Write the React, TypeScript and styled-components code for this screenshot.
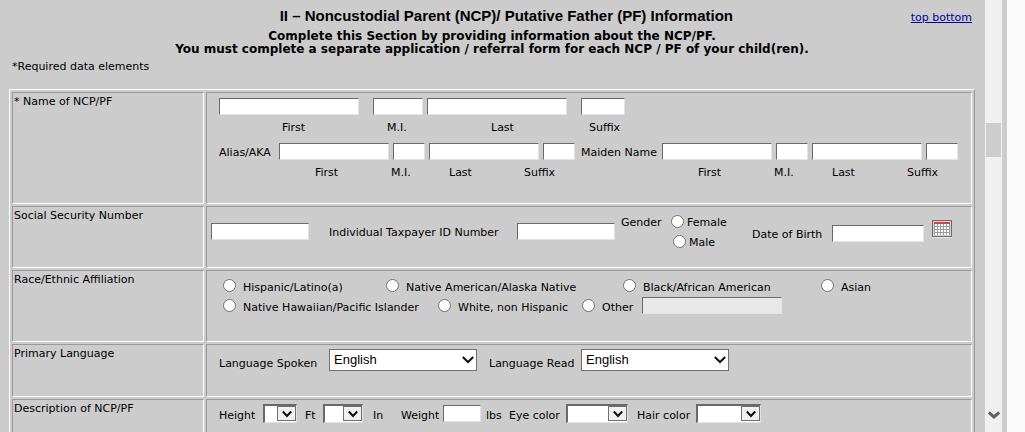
import React from "react";
import styled, { createGlobalStyle, css } from "styled-components";

const Global = createGlobalStyle`
  * { box-sizing: border-box; }
  body {
    margin: 0;
    background: #cccccc;
    color: #000;
    font: 11px/13px Verdana, "DejaVu Sans", sans-serif;
  }
`;

const Frame = styled.div`
  display: flex;
  height: 100vh;
  overflow: hidden;
`;

const Pane = styled.main`
  flex: 1;
  min-width: 0;
  padding: 8px 10px 0 9px;
  overflow: hidden;
`;

const ScrollTrack = styled.div`
  display: flex;
  flex-direction: column;
  justify-content: space-between;
  align-items: center;
  width: 17px;
  padding: 123px 0 13px;
  background: #f0f0f0;
`;

const ScrollThumb = styled.div`
  width: 15px;
  height: 34px;
  background: #cdcdcd;
`;

const Gutter = styled.div`
  width: 23px;
  border-left: 5px solid #cccccc;
  background: #fafafa;
`;

const Header = styled.header`
  display: flex;
  align-items: center;
  padding-right: 3px;
`;

const Title = styled.h1`
  flex: 1;
  margin: 0;
  padding-left: 93px;
  font: bold 15px/16px "Liberation Sans", Arial, sans-serif;
  text-align: center;
`;

const JumpLink = styled.a`
  padding-top: 2px;
  color: #00009c;
`;

const Intro = styled.p`
  margin: 6px 0 0;
  font-size: 12px;
  font-weight: bold;
  text-align: center;
`;

const Required = styled.p`
  margin: 4px 0 16px;
  padding-left: 3px;
`;

const FormTable = styled.table`
  width: 100%;
  border: 1px solid;
  border-color: #fff #999 #999 #fff;
  border-spacing: 2px;
  table-layout: fixed;
`;

const cell = css<{ $h?: number }>`
  height: ${(p) => p.$h}px;
  border: 1px solid;
  border-color: #999 #fff #fff #999;
  vertical-align: top;
`;

const RowHead = styled.th<{ $h: number }>`
  ${cell}
  width: 192px;
  padding: 2px 1px;
  font-weight: normal;
  text-align: left;
`;

const RowBody = styled.td`
  ${cell}
  padding: 0 0 0 12px;
`;

const Line = styled.div<{ $top?: number; $indent?: number }>`
  display: flex;
  align-items: center;
  margin-top: ${(p) => p.$top ?? 0}px;
  padding-left: ${(p) => p.$indent ?? 0}px;
  white-space: nowrap;
`;

const SsnLine = styled(Line)`
  margin-left: -8px;
`;

const Label = styled.label<{ $w?: number; $top?: number }>`
  flex: none;
  width: ${(p) => (p.$w ? `${p.$w}px` : "auto")};
  padding-top: ${(p) => p.$top ?? 0}px;
`;

const TextBox = styled.input<{ $w: number; $after?: number }>`
  flex: none;
  width: ${(p) => p.$w}px;
  height: 17px;
  margin: 0 ${(p) => p.$after ?? 4}px 0 0;
  padding: 0 2px;
  border: 1px solid;
  border-color: #696969 #e3e3e3 #e3e3e3 #696969;
  border-radius: 0;
  background: #fff;
  font: inherit;

  &:disabled {
    background: #e8e8e8;
  }
`;

const Radio = styled.input.attrs({ type: "radio" })<{ $after?: number }>`
  appearance: none;
  flex: none;
  width: 13px;
  height: 13px;
  margin: 0 ${(p) => p.$after ?? 7}px 0 0;
  border: 1px solid #707070;
  border-radius: 50%;
  background: #fff;

  &:checked {
    box-shadow: inset 0 0 0 3px #fff;
    background: #222;
  }
`;

const GenderGroup = styled.div`
  display: flex;
  align-items: flex-start;
`;

const Genders = styled.div`
  width: 81px;
`;

const Birth = styled.div`
  display: flex;
  align-items: center;
  padding-top: 4px;
`;

const SelectWrap = styled.span<{ $w: number; $after: number }>`
  position: relative;
  flex: none;
  width: ${(p) => p.$w}px;
  margin-right: ${(p) => p.$after}px;
`;

const LanguageSelect = styled.select`
  appearance: none;
  display: block;
  width: 100%;
  height: 22px;
  padding: 0 4px;
  border: 1px solid #707070;
  border-radius: 0;
  background: #fff;
  color: #000;
  font: 13px/20px "Liberation Sans", Arial, sans-serif;
`;

const LanguageArrow = styled.svg`
  position: absolute;
  top: 7px;
  right: 3px;
  pointer-events: none;
`;

const InsetSelect = styled.select`
  appearance: none;
  display: block;
  width: 100%;
  height: 19px;
  padding: 0 20px 0 2px;
  border: 1px solid;
  border-color: #696969 #e3e3e3 #e3e3e3 #696969;
  border-top-width: 2px;
  border-left-width: 2px;
  border-radius: 0;
  background: #fff;
  font: inherit;
`;

const InsetArrow = styled.span`
  position: absolute;
  top: 2px;
  right: 1px;
  display: flex;
  align-items: center;
  justify-content: center;
  width: 19px;
  height: 15px;
  border: 1px solid #707070;
  background: #f0f0f0;
  pointer-events: none;
`;

const CalendarButton = styled.button`
  width: 20px;
  height: 18px;
  margin: 0 0 6px 4px;
  padding: 0;
  border: 0;
  background: none;
  line-height: 0;
`;

function Chevron({ size, color = "#111", weight = 2 }: { size: number; color?: string; weight?: number }) {
  return (
    <svg width={size} height={8} viewBox={`0 0 ${size} 8`} aria-hidden="true">
      <path
        d={`M0.8 1.5 L${size / 2} 6 L${size - 0.8} 1.5`}
        fill="none"
        stroke={color}
        strokeWidth={weight}
      />
    </svg>
  );
}

function Language({ id, after = 0 }: { id: string; after?: number }) {
  return (
    <SelectWrap $w={148} $after={after}>
      <LanguageSelect id={id} defaultValue="English">
        <option>English</option>
      </LanguageSelect>
      <LanguageArrow width="12" height="8" viewBox="0 0 12 8" aria-hidden="true">
        <path d="M0.8 1 L6 6 L11.2 1" fill="none" stroke="#111" strokeWidth="2" />
      </LanguageArrow>
    </SelectWrap>
  );
}

function SmallSelect({ id, width, after = 0 }: { id: string; width: number; after?: number }) {
  return (
    <SelectWrap $w={width} $after={after}>
      <InsetSelect id={id}>
        <option></option>
      </InsetSelect>
      <InsetArrow>
        <Chevron size={10} />
      </InsetArrow>
    </SelectWrap>
  );
}

function Choice({ id, text, width }: { id: string; text: string; width?: number }) {
  return (
    <>
      <Radio id={id} name="race" />
      <Label htmlFor={id} $w={width} $top={5}>
        {text}
      </Label>
    </>
  );
}

function CalendarIcon() {
  const cols = [0, 1, 2, 3, 4];
  const rows = [0, 1, 2, 3];
  return (
    <svg width="20" height="18" viewBox="0 0 20 18" shapeRendering="crispEdges" aria-hidden="true">
      <rect width="20" height="17" fill="#6b6b6b" />
      <rect x="1" y="1" width="18" height="15" fill="#d4d4d4" />
      <rect x="2" y="2" width="16" height="2" fill="#d9433f" />
      <rect x="2" y="4" width="16" height="11" fill="#a09c9c" />
      {rows.map((r) =>
        cols.map((c) => (
          <rect key={`${r}-${c}`} x={3 + c * 3} y={4 + r * 3} width="2" height="2" fill="#fff" />
        ))
      )}
      <rect y="17" width="20" height="1" fill="#e6e6e6" />
    </svg>
  );
}

export default function App() {
  return (
    <>
      <Global />
      <Frame>
        <Pane>
          <Header>
            <Title>II – Noncustodial Parent (NCP)/ Putative Father (PF) Information</Title>
            <JumpLink href="#top">top bottom</JumpLink>
          </Header>
          <Intro>
            Complete this Section by providing information about the NCP/PF.
            <br />
            You must complete a separate application / referral form for each NCP / PF of your child(ren).
          </Intro>
          <Required>*Required data elements</Required>
          <FormTable>
            <tbody>
              <tr>
                <RowHead scope="row" $h={112}>* Name of NCP/PF</RowHead>
                <RowBody>
                  <Line $top={5}>
                    <TextBox id="first" $w={140} $after={14} />
                    <TextBox id="mi" $w={50} />
                    <TextBox id="last" $w={140} $after={14} />
                    <TextBox id="suffix" $w={44} />
                  </Line>
                  <Line $top={6} $indent={63}>
                    <Label htmlFor="first" $w={105}>First</Label>
                    <Label htmlFor="mi" $w={104}>M.I.</Label>
                    <Label htmlFor="last" $w={98}>Last</Label>
                    <Label htmlFor="suffix">Suffix</Label>
                  </Line>
                  <Line $top={9}>
                    <Label htmlFor="alias-first" $w={60} $top={1}>Alias/AKA</Label>
                    <TextBox id="alias-first" $w={110} />
                    <TextBox id="alias-mi" $w={32} />
                    <TextBox id="alias-last" $w={110} />
                    <TextBox id="alias-suffix" $w={32} $after={6} />
                    <Label htmlFor="maiden-first" $w={81} $top={1}>Maiden Name</Label>
                    <TextBox id="maiden-first" $w={110} />
                    <TextBox id="maiden-mi" $w={32} />
                    <TextBox id="maiden-last" $w={110} />
                    <TextBox id="maiden-suffix" $w={32} />
                  </Line>
                  <Line $top={6} $indent={96}>
                    <Label htmlFor="alias-first" $w={76}>First</Label>
                    <Label htmlFor="alias-mi" $w={58}>M.I.</Label>
                    <Label htmlFor="alias-last" $w={75}>Last</Label>
                    <Label htmlFor="alias-suffix" $w={174}>Suffix</Label>
                    <Label htmlFor="maiden-first" $w={76}>First</Label>
                    <Label htmlFor="maiden-mi" $w={58}>M.I.</Label>
                    <Label htmlFor="maiden-last" $w={75}>Last</Label>
                    <Label htmlFor="maiden-suffix">Suffix</Label>
                  </Line>
                </RowBody>
              </tr>
              <tr>
                <RowHead scope="row" $h={62}>Social Security Number</RowHead>
                <RowBody>
                  <SsnLine $top={7}>
                    <TextBox id="ssn" aria-label="Social Security Number" $w={98} $after={20} />
                    <Label htmlFor="itin" $w={188} $top={1}>Individual Taxpayer ID Number</Label>
                    <TextBox id="itin" $w={98} $after={6} />
                    <GenderGroup role="radiogroup" aria-label="Gender">
                      <Label as="span" $w={50} $top={2}>Gender</Label>
                      <Genders>
                        <Line>
                          <Radio id="female" name="gender" $after={3} />
                          <Label htmlFor="female" $top={2}>Female</Label>
                        </Line>
                        <Line $top={5} $indent={2}>
                          <Radio id="male" name="gender" $after={3} />
                          <Label htmlFor="male" $top={2}>Male</Label>
                        </Line>
                      </Genders>
                    </GenderGroup>
                    <Birth>
                      <Label htmlFor="dob" $w={80} $top={2}>Date of Birth</Label>
                      <TextBox id="dob" $w={92} />
                    </Birth>
                    <CalendarButton type="button" aria-label="Choose date">
                      <CalendarIcon />
                    </CalendarButton>
                  </SsnLine>
                </RowBody>
              </tr>
              <tr>
                <RowHead scope="row" $h={72}>Race/Ethnic Affiliation</RowHead>
                <RowBody>
                  <Line $top={5} $indent={4}>
                    <Choice id="hispanic" text="Hispanic/Latino(a)" width={143} />
                    <Choice id="native-american" text="Native American/Alaska Native" width={217} />
                    <Choice id="black" text="Black/African American" width={178} />
                    <Choice id="asian" text="Asian" />
                  </Line>
                  <Line $top={2} $indent={4}>
                    <Choice id="pacific" text="Native Hawaiian/Pacific Islander" width={195} />
                    <Choice id="white" text="White, non Hispanic" width={124} />
                    <Choice id="other" text="Other" width={40} />
                    <TextBox aria-label="Other race" disabled $w={140} />
                  </Line>
                </RowBody>
              </tr>
              <tr>
                <RowHead scope="row" $h={53}>Primary Language</RowHead>
                <RowBody>
                  <Line $top={4}>
                    <Label htmlFor="spoken" $w={110} $top={6}>Language Spoken</Label>
                    <Language id="spoken" after={12} />
                    <Label htmlFor="read" $w={92} $top={6}>Language Read</Label>
                    <Language id="read" />
                  </Line>
                </RowBody>
              </tr>
              <tr>
                <RowHead scope="row" $h={62}>Description of NCP/PF</RowHead>
                <RowBody>
                  <Line $top={4}>
                    <Label htmlFor="feet" $w={44} $top={3}>Height</Label>
                    <SmallSelect id="feet" width={34} after={8} />
                    <Label htmlFor="feet" $w={18} $top={3}>Ft</Label>
                    <SmallSelect id="inches" width={40} after={10} />
                    <Label htmlFor="inches" $w={28} $top={3}>In</Label>
                    <Label htmlFor="weight" $w={42} $top={3}>Weight</Label>
                    <TextBox id="weight" $w={38} $after={5} />
                    <Label htmlFor="weight" $w={23} $top={3}>lbs</Label>
                    <Label htmlFor="eyes" $w={57} $top={3}>Eye color</Label>
                    <SmallSelect id="eyes" width={62} after={9} />
                    <Label htmlFor="hair" $w={59} $top={3}>Hair color</Label>
                    <SmallSelect id="hair" width={65} />
                  </Line>
                </RowBody>
              </tr>
            </tbody>
          </FormTable>
        </Pane>
        <ScrollTrack aria-hidden="true">
          <ScrollThumb />
          <Chevron size={12} color="#606060" weight={3} />
        </ScrollTrack>
        <Gutter />
      </Frame>
    </>
  );
}
